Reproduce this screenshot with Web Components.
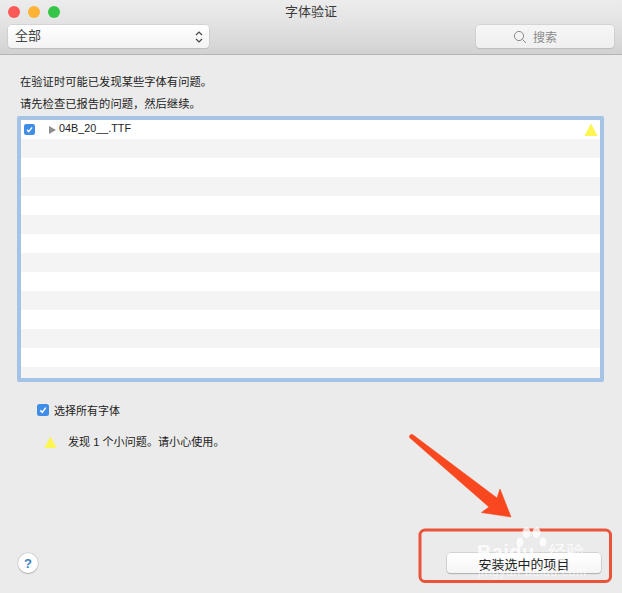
<!DOCTYPE html>
<html lang="zh">
<head>
<meta charset="utf-8">
<title>字体验证</title>
<style>
  html, body { margin: 0; padding: 0; background: #ebebeb; }
  body { font: 11px "Liberation Sans", "Noto Sans CJK SC", sans-serif; color: #222; }
</style>
</head>
<body>

<font-window>
  <title-bar slot="top" heading="字体验证"></title-bar>

  <intro-line>在验证时可能已发现某些字体有问题。</intro-line>
  <intro-line second>请先检查已报告的问题，然后继续。</intro-line>

  <font-list id="list"></font-list>

  <select-all>选择所有字体</select-all>
  <warn-line>发现 1 个小问题。请小心使用。</warn-line>

  <foot-bar>
    <help-button></help-button>
    <push-button>安装选中的项目</push-button>
  </foot-bar>

  <mark-layer></mark-layer>
</font-window>

<script>
const CHECK = `<svg viewBox="0 0 12 12" width="100%" height="100%"><rect width="12" height="12" rx="2.5" fill="#3f8de6"/><path d="M3.3 6.3 5.2 8.4 8.8 3.6" fill="none" stroke="#fff" stroke-width="1.5"/></svg>`;
const WARN = `<svg viewBox="0 0 14 13" width="100%" height="100%"><path d="M7 0.5 13.6 13H0.4Z" fill="#fcf552"/></svg>`;

class FontWindow extends HTMLElement {
  connectedCallback() {
    this.attachShadow({mode:'open'});
    this.shadowRoot.innerHTML = `
    <style>
      :host {
        display: flex;
        flex-direction: column;
        position: relative;
        width: 622px;
        height: 593px;
        overflow: hidden;
        background: #ebebeb;
      }
      .body { flex: 1; display: flex; flex-direction: column; padding-top: 18px; min-height: 0; }
    </style>
    <slot name="top"></slot>
    <div class="body"><slot></slot></div>
    `;
  }
}

class TitleBar extends HTMLElement {
  connectedCallback() {
    this.attachShadow({mode:'open'});
    this.shadowRoot.innerHTML = `
    <style>
      :host {
        display: block;
        box-sizing: border-box;
        height: 55px;
        padding: 0 8px;
        background: linear-gradient(#ececec, #e5e5e5 35%, #d2d2d2);
        border-bottom: 1px solid #b4b4b4;
        border-radius: 5px 5px 0 0;
        font-family: "Liberation Sans", "Noto Sans CJK SC", sans-serif;
      }
      .top { position: relative; height: 25px; display: flex; align-items: center; }
      .lights { display: flex; gap: 8px; margin: -2px 0 0 0; }
      .lights i { display: block; width: 12px; height: 12px; border-radius: 50%; }
      .title { position: absolute; left: 0; right: 0; top: 3px; text-align: center; font-size: 13px; line-height: 18px; color: #3a3a3a; }
      .tools { display: flex; justify-content: space-between; height: 23px; }
      .popup, .search {
        box-sizing: border-box;
        height: 23px;
        background: linear-gradient(#fff, #f3f3f3);
        border-radius: 4px;
        box-shadow: 0 0 0 .5px #c6c6c6, 0 1px 1px #b5b5b5;
      }
      .popup { width: 201px; display: flex; align-items: center; justify-content: space-between; padding: 0 6px 0 7px; font-size: 13px; color: #444; }
      .popup span { margin-top: -5px; }
      .search { width: 138px; display: flex; align-items: center; justify-content: center; gap: 6px; padding-right: 20px; font-size: 12px; color: #8a8a8a; background: linear-gradient(#f6f6f6, #efefef); }
    </style>
    <div class="top">
      <div class="lights">
        <i style="background:#fb5a58"></i><i style="background:#fdb436"></i><i style="background:#35c648"></i>
      </div>
      <div class="title">${this.getAttribute('heading')}</div>
    </div>
    <div class="tools">
      <div class="popup"><span>全部</span>
        <svg width="8" height="14" viewBox="0 0 8 14"><path d="M1 5 4 2 7 5M1 9 4 12 7 9" fill="none" stroke="#444" stroke-width="1.2"/></svg>
      </div>
      <div class="search">
        <svg width="14" height="14" viewBox="0 0 14 14"><circle cx="6" cy="6" r="4.6" fill="none" stroke="#8a8a8a" stroke-width="1"/><path d="M9.4 9.4 13 13" stroke="#8a8a8a" stroke-width="1"/></svg>
        <span>搜索</span>
      </div>
    </div>
    `;
  }
}

class IntroLine extends HTMLElement {
  connectedCallback() {
    this.attachShadow({mode:'open'});
    this.shadowRoot.innerHTML = `
    <style>
      :host { display: block; height: 18px; line-height: 18px; margin: 0 0 4px 20px; font-size: 11.3px; color: #222; }
      :host([second]) { margin-bottom: 3px; }
    </style>
    <slot></slot>
    `;
  }
}

class FontList extends HTMLElement {
  connectedCallback() {
    this.attachShadow({mode:'open'});
    this.shadowRoot.innerHTML = `
    <style>
      :host {
        display: block;
        box-sizing: border-box;
        width: 587px;
        height: 266px;
        margin-left: 17px;
        overflow: hidden;
        background: #f4f4f5;
        border: 4px solid #a5c3e4;
        border-radius: 2px;
      }
    </style>
    <slot></slot>
    `;
    let html = '<font-row name="04B_20__.TTF" warn></font-row>';
    for (let i = 0; i < 14; i++) html += '<font-row></font-row>';
    this.innerHTML = html;
  }
}

class FontRow extends HTMLElement {
  connectedCallback() {
    this.attachShadow({mode:'open'});
    const name = this.getAttribute('name');
    this.shadowRoot.innerHTML = `
    <style>
      :host { display: flex; align-items: center; height: 19px; background: #f4f4f5; font-size: 10.8px; color: #222; }
      :host(:nth-child(odd)) { background: #fff; }
      .check { width: 11px; height: 11px; margin-left: 3px; }
      .arrow { width: 0; height: 0; margin: 0 3px 0 14px; border-left: 7px solid #8e8e8e; border-top: 4.5px solid transparent; border-bottom: 4.5px solid transparent; }
      .name { flex: 1; margin-top: -3px; }
      .warn { width: 14px; height: 13px; margin-right: 2px; }
    </style>
    ${name ? `
      <div class="check">${CHECK}</div>
      <div class="arrow"></div>
      <div class="name">${name}</div>
      ${this.hasAttribute('warn') ? `<div class="warn">${WARN}</div>` : ''}
    ` : ''}
    `;
  }
}

class SelectAll extends HTMLElement {
  connectedCallback() {
    this.attachShadow({mode:'open'});
    this.shadowRoot.innerHTML = `
    <style>
      :host { display: flex; align-items: center; gap: 5px; height: 18px; margin: 19px 0 0 37px; font-size: 11px; color: #222; }
      .check { width: 12px; height: 12px; }
    </style>
    <div class="check">${CHECK}</div><slot></slot>
    `;
  }
}

class WarnLine extends HTMLElement {
  connectedCallback() {
    this.attachShadow({mode:'open'});
    this.shadowRoot.innerHTML = `
    <style>
      :host { display: flex; align-items: center; gap: 11px; height: 18px; margin: 13px 0 0 44px; font-size: 11.1px; color: #222; }
      .warn { width: 13px; height: 12px; margin-top: 2px; }
    </style>
    <div class="warn">${WARN}</div><slot></slot>
    `;
  }
}

class FootBar extends HTMLElement {
  connectedCallback() {
    this.attachShadow({mode:'open'});
    this.shadowRoot.innerHTML = `
    <style>
      :host { flex: 1; display: flex; align-items: flex-end; justify-content: space-between; padding: 0 21px 20px 18px; }
    </style>
    <slot></slot>
    `;
  }
}

class HelpButton extends HTMLElement {
  connectedCallback() {
    this.attachShadow({mode:'open'});
    this.shadowRoot.innerHTML = `
    <style>
      :host {
        display: flex; align-items: center; justify-content: center;
        box-sizing: border-box;
        width: 20px; height: 20px;
        background: #fff;
        border-radius: 50%;
        box-shadow: 0 0 0 .5px #bdbdbd, 0 1px 1px #aaa;
        font: bold 13px "Liberation Sans", sans-serif;
        color: #3c7fc0;
      }
    </style>
    ?
    `;
  }
}

class PushButton extends HTMLElement {
  connectedCallback() {
    this.attachShadow({mode:'open'});
    this.shadowRoot.innerHTML = `
    <style>
      :host {
        display: flex; align-items: center; justify-content: center;
        box-sizing: border-box;
        width: 154px; height: 20px;
        background: linear-gradient(#fff, #f5f5f5);
        border-radius: 4px;
        box-shadow: 0 0 0 .5px #bbb, 0 1px 1px #a5a5a5;
        font-size: 13px;
        color: #222;
      }
    </style>
    <slot></slot>
    `;
  }
}

// arrow, red box and the watermark lie over the window
class MarkLayer extends HTMLElement {
  connectedCallback() {
    this.attachShadow({mode:'open'});
    this.shadowRoot.innerHTML = `
    <style>
      :host { position: absolute; left: 0; top: 0; width: 622px; height: 593px; pointer-events: none; }
      svg { position: absolute; left: 0; top: 0; }
      span { position: absolute; color: rgba(255,255,255,.78); white-space: nowrap; }
      .bai { left: 477px; top: 542px; font: bold 20px/20px "Liberation Sans", sans-serif; letter-spacing: .4px; }
      .jing { left: 548px; top: 541px; font: 18px/20px "Noto Sans CJK SC", sans-serif; }
      .url { left: 478px; top: 566px; font: 12px/12px "Liberation Sans", sans-serif; letter-spacing: .7px; color: rgba(255,255,255,.6); }
    </style>
    <svg width="622" height="593" viewBox="0 0 622 593">
      <path d="M409.500 437.500 Q409 434 412.500 434.500 L497 498 500 489 511 517 481.500 512.500 489 507 Z" fill="#f9481f" stroke="#f9481f" stroke-width=".6" stroke-linejoin="round"/>
      <rect x="420" y="530" width="190.500" height="51.500" rx="5" fill="none" stroke="#e9543a" stroke-width="3"/>
      <g fill="#fff" fill-opacity=".78">
        <ellipse cx="526.500" cy="532.500" rx="4" ry="5.400"/>
        <ellipse cx="536.500" cy="532.500" rx="4" ry="5.400"/>
        <ellipse cx="520" cy="542" rx="3.400" ry="4.600"/>
        <ellipse cx="543" cy="542" rx="3.400" ry="4.600"/>
      </g>
    </svg>
    <span class="bai">Baidu</span>
    <span class="jing">经验</span>
    <span class="url">jingyan.baidu.com</span>
    `;
  }
}

customElements.define('font-window', FontWindow);
customElements.define('title-bar', TitleBar);
customElements.define('intro-line', IntroLine);
customElements.define('font-list', FontList);
customElements.define('font-row', FontRow);
customElements.define('select-all', SelectAll);
customElements.define('warn-line', WarnLine);
customElements.define('foot-bar', FootBar);
customElements.define('help-button', HelpButton);
customElements.define('push-button', PushButton);
customElements.define('mark-layer', MarkLayer);
</script>
</body>
</html>
